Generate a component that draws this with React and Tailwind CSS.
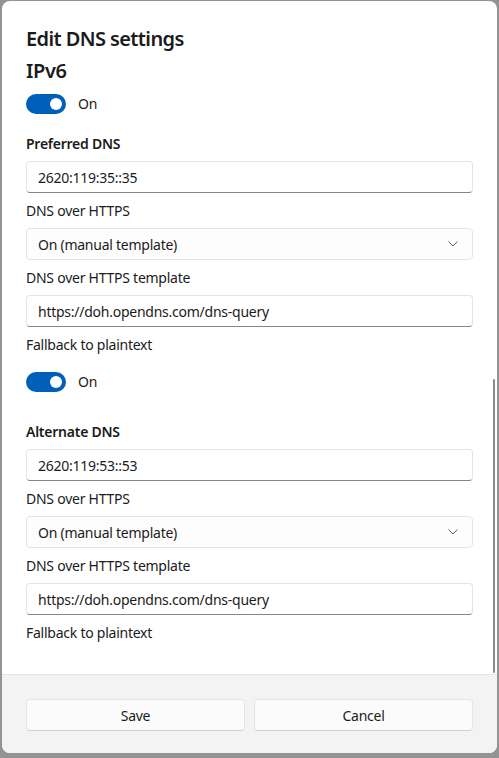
import React from "react";

const font = { fontFamily: '"Noto Sans", "Open Sans", sans-serif' };

function Toggle() {
  return (
    <div className="flex items-center h-5">
      <div className="w-10 h-5 rounded-full bg-[#005fb8] flex items-center justify-end pr-[4px]">
        <div className="w-3 h-3 rounded-full bg-white" />
      </div>
      <span className="ml-3 text-[14px] leading-5 tracking-[-0.25px] text-[#1b1b1b]">On</span>
    </div>
  );
}

function Label({ children, bold, className = "" }) {
  return (
    <div
      className={`h-5 text-[14px] leading-5 tracking-[-0.25px] text-[#1b1b1b] ${bold ? "font-semibold" : ""} ${className}`}
    >
      {children}
    </div>
  );
}

function TextBox({ value }) {
  return (
    <div className="mt-[7px] h-8 rounded-[4px] border border-[#e5e5e5] border-b-[#868686] bg-white flex items-center px-[11px] text-[14px] tracking-[-0.25px] text-[#1b1b1b]">
      {value}
    </div>
  );
}

function Combo({ value }) {
  return (
    <div className="mt-[7px] h-8 rounded-[4px] border border-[#e5e5e5] bg-[#fdfdfd] flex items-center justify-between pl-[11px] pr-[14px] text-[14px] tracking-[-0.25px] text-[#1b1b1b]">
      <span>{value}</span>
      <svg width="10" height="6" viewBox="0 0 10 6" fill="none">
        <path d="M0.8 0.8 L5 5 L9.2 0.8" stroke="#5d5d5d" strokeWidth="1" strokeLinecap="round" strokeLinejoin="round" />
      </svg>
    </div>
  );
}

function DnsGroup({ title, address, first }) {
  return (
    <div>
      <Label bold className={first ? "mt-[20px]" : "mt-[30px]"}>
        {title}
      </Label>
      <TextBox value={address} />
      <Label className="mt-2">DNS over HTTPS</Label>
      <Combo value="On (manual template)" />
      <Label className="mt-2">DNS over HTTPS template</Label>
      <TextBox value="https://doh.opendns.com/dns-query" />
      <Label className="mt-2">Fallback to plaintext</Label>
    </div>
  );
}

export default function App() {
  return (
    <div
      className="w-[499px] h-[758px] bg-[#939393] overflow-hidden flex flex-col pt-[1px] pl-[2px]"
      style={font}
    >
      <div className="w-[495px] h-[752px] shrink-0 bg-white rounded-[8px] overflow-hidden flex flex-col relative">
        <div className="flex-1 overflow-hidden px-6 pt-6">
          <div className="h-7 text-[20px] leading-7 font-semibold tracking-[-0.6px] text-[#1b1b1b]">Edit DNS settings</div>
          <div className="mt-1 h-7 text-[20px] leading-7 font-semibold tracking-[-0.4px] text-[#1b1b1b]">IPv6</div>
          <div className="mt-[9px]">
            <Toggle />
          </div>
          <DnsGroup title="Preferred DNS" address="2620:119:35::35" first />
          <div className="mt-[17px]">
            <Toggle />
          </div>
          <DnsGroup title="Alternate DNS" address="2620:119:53::53" />
        </div>
        {/* scroll thumb */}
        <div className="absolute right-[2px] top-[378px] w-[2px] h-[294px] rounded-full bg-[#8a8a8a]" />
        <div className="h-[79px] shrink-0 border-t border-[#e5e5e5] bg-[#f3f3f3] px-6 pt-6 flex gap-[9px]">
          <button className="flex-1 h-8 rounded-[4px] border border-[#e5e5e5] border-b-[#d0d0d0] bg-[#fbfbfb] text-[14px] tracking-[-0.25px] text-[#1b1b1b]">
            Save
          </button>
          <button className="flex-1 h-8 rounded-[4px] border border-[#e5e5e5] border-b-[#d0d0d0] bg-[#fbfbfb] text-[14px] tracking-[-0.25px] text-[#1b1b1b]">
            Cancel
          </button>
        </div>
      </div>
      {/* page behind the dialog */}
      <div className="flex text-[14px] leading-5 text-[#2b2b2b] pt-[1px]">
        <span className="w-[224px] pl-[34px]">Physical address (MAC):</span>
        <span>04-4E-7D-0A-2F-6B</span>
      </div>
    </div>
  );
}
